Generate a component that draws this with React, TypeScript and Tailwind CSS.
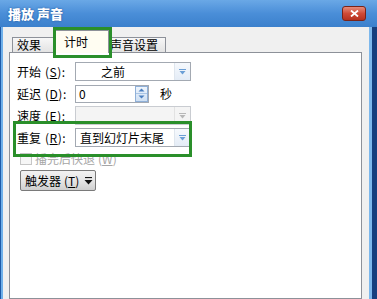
import React from "react";

const font = { fontFamily: '"Noto Sans CJK SC", "Noto Sans", sans-serif' };

function Arrow({ color = "#5b8fc8" }: { color?: string }) {
  return (
    <svg width="9" height="6" viewBox="0 0 9 6">
      <path d="M1 0.5 H8" stroke={color} strokeWidth="1" />
      <path d="M1.5 2 L7.5 2 L4.5 5.5 Z" fill={color} />
    </svg>
  );
}

function Combo({ text, disabled, pl }: { text?: string; disabled?: boolean; pl: string }) {
  return (
    <div
      className={`flex h-[19px] w-[116px] border ${disabled ? "border-[#c9ccd1] bg-[#f4f4f4]" : "border-[#a3a9b2] bg-white"}`}
    >
      <div className={`flex-1 flex items-center text-[12px] leading-none text-black ${pl}`}>{text}</div>
      <div className={`w-[16px] flex items-center justify-center border-l ${disabled ? "border-[#e2e2e2] bg-[#f4f4f4]" : "border-[#dfe6ee] bg-gradient-to-b from-[#f6f9fd] to-[#e4ecf6]"}`}>
        <Arrow color={disabled ? "#b8b8b8" : "#6b9fd6"} />
      </div>
    </div>
  );
}

function Label({ name, k }: { name: string; k: string }) {
  return (
    <div className="w-[58px] text-[12px] leading-none text-black whitespace-nowrap">
      {name}
      <span className="ml-[4px] tracking-[0.5px]">(<span className="underline">{k}</span>):</span>
    </div>
  );
}

export default function App() {
  return (
    <div className="w-[377px] h-[299px] overflow-hidden flex flex-col bg-[#3f84cf] relative" style={font}>
      {/* title bar */}
      <div className="h-[27px] flex items-center justify-between pl-[8px] pr-[11px] bg-gradient-to-b from-[#6aa8e6] via-[#4a8ed8] to-[#3b80cc]">
        <div className="text-white font-black text-[13px] leading-none [text-shadow:0_0_2px_#1d4f93]">播放 声音</div>
        <div className="w-[24px] h-[15px] rounded-[3px] border border-[#7a2318] bg-gradient-to-b from-[#e58b7b] via-[#cf4a36] to-[#b5301e] flex items-center justify-center">
          <svg width="9" height="7" viewBox="0 0 9 7">
            <path d="M1 0.5 L8 6.5 M8 0.5 L1 6.5" stroke="white" strokeWidth="1.8" />
          </svg>
        </div>
      </div>
      {/* body */}
      <div className="flex-1 flex">
        <div className="w-[3px] flex">
          <div className="w-[1px] bg-[#1e5aa8]" />
          <div className="w-[2px] bg-[#6fb0ea]" />
        </div>
        <div className="flex-1 flex flex-col bg-[#f0f0f0] pl-[6px] pr-[7px]">
          {/* tabs */}
          <div className="h-[25px] flex items-end pl-[3px]">
            <div className="w-[42px] h-[15px] border border-b-0 border-[#8d9199] bg-gradient-to-b from-[#f7f7f7] to-[#e3e3e3] text-[12px] leading-none pl-[4px] pt-[1px] text-black">效果</div>
            <div className="w-[55px] h-[23px] -mb-[1px] border border-b-0 border-[#8d9199] bg-[#fffdf2] text-[12px] leading-none pl-[9px] pt-[5px] text-black relative z-10">计时</div>
            <div className="w-[57px] h-[15px] border border-b-0 border-l-0 border-[#8d9199] bg-gradient-to-b from-[#f7f7f7] to-[#e3e3e3] text-[12px] leading-none pl-[1px] pt-[1px] text-black">声音设置</div>
          </div>
          {/* panel */}
          <div className="flex-1 border border-[#8d9199] bg-white pl-[7px] pt-[9px] flex flex-col">
            <div className="flex items-center h-[19px]">
              <Label name="开始" k="S" />
              <Combo text="之前" pl="pl-[25px]" />
            </div>
            <div className="flex items-center h-[19px] mt-[3px]">
              <Label name="延迟" k="D" />
              <div className="flex h-[18px] w-[74px] border border-[#a3a9b2] bg-white">
                <div className="flex-1 flex items-center pl-[3px] text-[12px] leading-none text-black">0</div>
                <div className="w-[13px] flex flex-col border border-[#8fb0d8] bg-gradient-to-b from-[#eef5fd] to-[#cfe0f3]">
                  <div className="flex-1 flex items-center justify-center border-b border-[#a9c4e4]">
                    <svg width="7" height="4" viewBox="0 0 7 4"><path d="M0.5 3.5 L3.5 0.5 L6.5 3.5 Z" fill="#4a7fbf" /></svg>
                  </div>
                  <div className="flex-1 flex items-center justify-center">
                    <svg width="7" height="4" viewBox="0 0 7 4"><path d="M0.5 0.5 L3.5 3.5 L6.5 0.5 Z" fill="#4a7fbf" /></svg>
                  </div>
                </div>
              </div>
              <div className="ml-[11px] text-[12px] leading-none text-black">秒</div>
            </div>
            <div className="flex items-center h-[19px] mt-[3px]">
              <Label name="速度" k="E" />
              <Combo disabled pl="pl-[3px]" />
            </div>
            <div className="flex items-center h-[19px] mt-[3px]">
              <Label name="重复" k="R" />
              <Combo text="直到幻灯片末尾" pl="pl-[4px]" />
            </div>
            <div className="flex items-center h-[13px] mt-[5px] pl-[3px]">
              <div className="w-[12px] h-[12px] border border-[#c6c6c6] bg-[#f6f6f6]" />
              <div className="ml-[3px] text-[12px] leading-none text-[#a6a6a6]">
                播完后快退<span className="ml-[3px]">(<span className="underline">W</span>)</span>
              </div>
            </div>
            <div className="mt-[5px] ml-[3px] w-[76px] h-[21px] rounded-[2px] border border-[#7a7a7a] bg-gradient-to-b from-[#f2f2f2] via-[#e6e6e6] to-[#cfcfcf] flex items-center pl-[4px] text-[12px] leading-none text-black">
              触发器<span className="ml-[3px]">(<span className="underline">T</span>)</span>
              <svg className="ml-[5px]" width="9" height="8" viewBox="0 0 9 8">
                <path d="M1 0.5 H8" stroke="#111" strokeWidth="1.2" />
                <path d="M0.5 3 L8.5 3 L4.5 7.5 Z" fill="#111" />
              </svg>
            </div>
          </div>
        </div>
        <div className="w-[8px] flex">
          <div className="w-[3px] bg-[#7db8ec]" />
          <div className="w-[5px] bg-[#163f7e]" />
        </div>
      </div>
      {/* annotations */}
      <div className="absolute left-[53px] top-[27px] w-[59px] h-[31px] border-[3px] border-[#2a8f2a] z-20" />
      <div className="absolute left-[13px] top-[121px] w-[179px] h-[36px] border-[3px] border-[#2a8f2a] z-20" />
    </div>
  );
}
